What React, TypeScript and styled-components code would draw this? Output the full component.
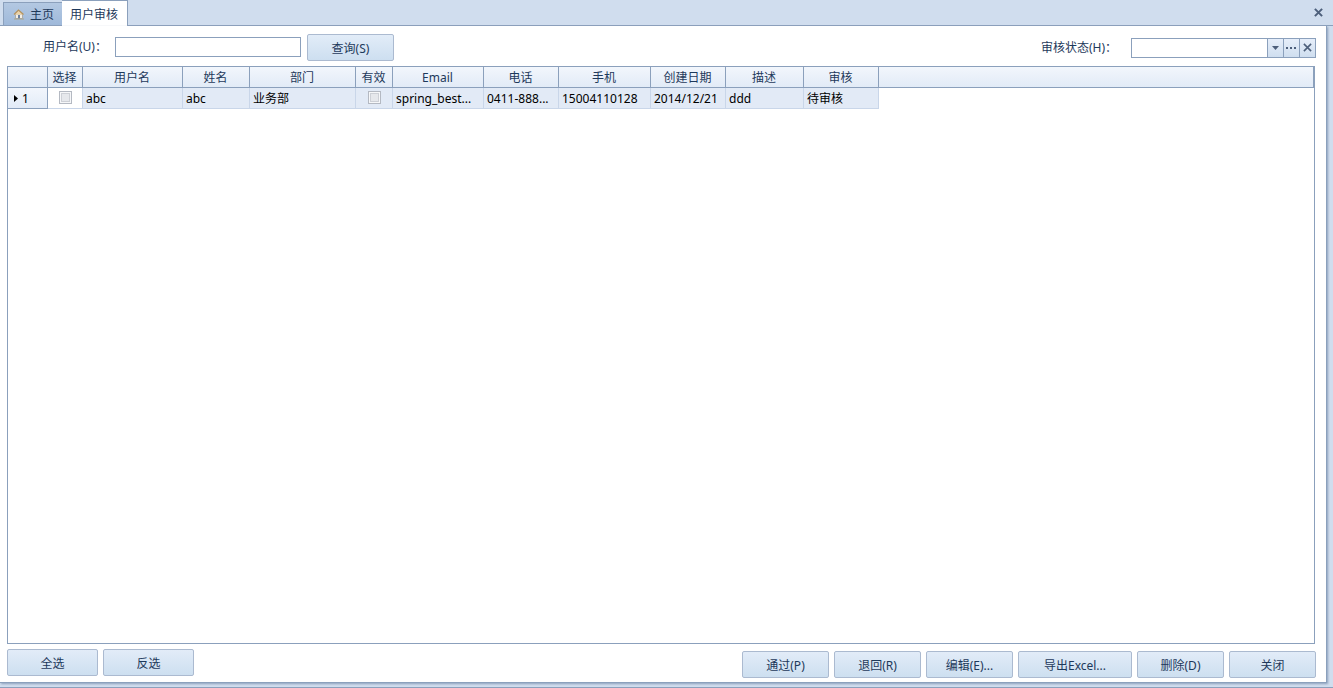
import React, { useState } from "react";
import styled, { createGlobalStyle } from "styled-components";

const Global = createGlobalStyle`
  * { box-sizing: border-box; }
  body { margin: 0; background: #d0ddee; }
  body, button, input, table {
    font-family: "Noto Sans", "Noto Sans CJK SC", sans-serif;
    font-size: 12px;
    line-height: 16px;
    color: #1e395b;
  }
`;

const Window = styled.div`
  min-height: 100vh;
  display: flex;
  flex-direction: column;
  background: #d0ddee;
  border-bottom: 1px solid #8ba0bc;
`;

const TabStrip = styled.div`
  display: flex;
  align-items: flex-end;
  height: 26px;
  padding-left: 3px;
  border-bottom: 1px solid #8ba0bc;
`;

const Tab = styled.button<{ $active?: boolean }>`
  display: flex;
  align-items: center;
  gap: 5px;
  height: ${(p) => (p.$active ? 26 : 23)}px;
  margin-bottom: ${(p) => (p.$active ? -1 : 0)}px;
  padding: ${(p) => (p.$active ? "2px 9px 0 8px" : "2px 8px 0 9px")};
  border: 1px solid #8ba0bc;
  border-width: ${(p) => (p.$active ? "1px 1px 0 0" : "1px 0 0 1px")};
  background: ${(p) => (p.$active ? "#fff" : "linear-gradient(#b3c8e2, #9fb9da)")};
  white-space: nowrap;
`;

const CloseTab = styled.button`
  margin-left: auto;
  margin-right: 10px;
  align-self: center;
  display: flex;
  padding: 0;
  border: 0;
  background: none;
`;

const Panel = styled.main`
  flex: 1;
  display: flex;
  flex-direction: column;
  margin: 0 6px 4px 0;
  padding: 8px 11px 4px 7px;
  background: #fff;
  border: 1px solid #8ba0bc;
  border-width: 0 1px 1px 0;
  box-shadow: 1px 1px 2px #8ba0bc;
`;

const SearchBar = styled.form`
  display: flex;
  align-items: center;
  height: 27px;
  margin-bottom: 5px;
  margin-right: -1px;
  padding-left: 36px;
`;

const Field = styled.label<{ $right?: boolean }>`
  display: flex;
  align-items: center;
  margin-left: ${(p) => (p.$right ? "auto" : "0")};
  padding-bottom: ${(p) => (p.$right ? 0 : 2)}px;
  white-space: nowrap;
`;

const Caption = styled.span<{ $width: number }>`
  width: ${(p) => p.$width}px;
`;

const TextBox = styled.input<{ $width: number }>`
  width: ${(p) => p.$width}px;
  height: 20px;
  padding: 0 4px;
  border: 1px solid #8ba0bc;
  background: #fff;
  outline: none;
`;

const Combo = styled.div`
  display: flex;
`;

const ComboButton = styled.button`
  display: flex;
  align-items: center;
  justify-content: center;
  width: 16px;
  height: 20px;
  padding: 0;
  border: 1px solid #8ba0bc;
  border-left: 0;
  background: linear-gradient(#e6eefa, #cfdeef);
`;

const Button = styled.button<{ $width: number }>`
  width: ${(p) => p.$width}px;
  height: 27px;
  padding: 2px 0 0;
  border: 1px solid #abbad0;
  border-radius: 2px;
  background: linear-gradient(#e2ecf8, #cddff0);
  white-space: nowrap;
`;

const SearchButton = styled(Button)`
  margin-left: 6px;
`;

const GridBox = styled.section`
  flex: 1;
  border: 1px solid #8ba0bc;
`;

const Grid = styled.table`
  width: 100%;
  table-layout: fixed;
  border-collapse: separate;
  border-spacing: 0;
`;

const HeadCell = styled.th`
  height: 21px;
  padding: 2px 1px 0 0;
  font-weight: 400;
  text-align: center;
  background: linear-gradient(#f2f6fc, #e2ebf7);
  border: 1px solid #8ba0bc;
  border-width: 0 1px 1px 0;
`;

const Cell = styled.td<{ $plain?: boolean }>`
  height: 21px;
  padding: 2px 3px 0;
  overflow: hidden;
  text-overflow: ellipsis;
  white-space: nowrap;
  color: #000;
  background: ${(p) => (p.$plain ? "#fff" : "#e2eaf6")};
  border: 1px solid #c9d6e9;
  border-width: 0 1px 1px 0;
`;

const CheckCell = styled(Cell)`
  padding: 0;
  text-align: center;
`;

const RowHead = styled.th`
  height: 21px;
  padding: 2px 6px 0;
  text-align: left;
  font-weight: 400;
  color: #000;
  background: linear-gradient(#f2f6fc, #e2ebf7);
  border: 1px solid #8ba0bc;
  border-width: 0 1px 1px 0;
`;

const RowMark = styled.svg`
  margin-right: 4px;
  vertical-align: 1px;
`;

const Filler = styled.td``;

const Tick = styled.input`
  appearance: none;
  display: block;
  width: 13px;
  height: 13px;
  margin: 0 auto 2px;
  border: 1px solid #b4b9c2;
  background: #e6e8ec;
  box-shadow: inset 0 0 0 1px #f6f7f9, inset 0 0 0 2px #cdd0d6;
  &:checked { background: #6f86a8; }
`;

const Footer = styled.footer`
  display: flex;
  gap: 5px;
  padding-top: 5px;
  margin-right: -1px;
`;

const FooterGroup = styled.div<{ $right?: boolean }>`
  display: flex;
  gap: 5px;
  margin-left: ${(p) => (p.$right ? "auto" : "0")};
  padding-top: ${(p) => (p.$right ? 2 : 0)}px;
`;

const columns = [
  { title: "选择", width: 35 },
  { title: "用户名", width: 100 },
  { title: "姓名", width: 67 },
  { title: "部门", width: 106 },
  { title: "有效", width: 37 },
  { title: "Email", width: 91 },
  { title: "电话", width: 75 },
  { title: "手机", width: 92 },
  { title: "创建日期", width: 75 },
  { title: "描述", width: 78 },
  { title: "审核", width: 75 },
];

const actions = [
  { text: "通过(P)", width: 87 },
  { text: "退回(R)", width: 87 },
  { text: "编辑(E)...", width: 87 },
  { text: "导出Excel...", width: 114 },
  { text: "删除(D)", width: 87 },
  { text: "关闭", width: 87 },
];

const HomeIcon = () => (
  <svg width="12" height="12" viewBox="0 0 12 12" aria-hidden="true">
    <path d="M2.5 5h7v4.500h-7z" fill="#f4efe6" stroke="#a3a09a" strokeWidth="0.800" />
    <path d="M1 5.500L5.500 1l5 4.500" fill="#ecd3a8" stroke="#b3925f" strokeWidth="1.200" />
    <path d="M5 6h2v3.500H5z" fill="#6a7f9f" />
    <path d="M1 10h10" stroke="#a9a58c" strokeWidth="1" />
  </svg>
);

const Cross = ({ size, weight }: { size: number; weight: number }) => (
  <svg width={size} height={size} viewBox="0 0 8 8" aria-hidden="true">
    <path d="M0.8 0.8l6.4 6.4M7.2 0.8L0.8 7.2" stroke="#4d5f7b" strokeWidth={weight} />
  </svg>
);

export default function App() {
  const [name, setName] = useState("");
  const [status, setStatus] = useState("");
  return (
    <>
      <Global />
      <Window>
        <TabStrip>
          <Tab type="button"><HomeIcon />主页</Tab>
          <Tab type="button" $active>用户审核</Tab>
          <CloseTab type="button" aria-label="关闭标签"><Cross size={9} weight={1.8} /></CloseTab>
        </TabStrip>
        <Panel>
          <SearchBar onSubmit={(e) => e.preventDefault()}>
            <Field>
              <Caption $width={72}>用户名(U)：</Caption>
              <TextBox $width={186} value={name} onChange={(e) => setName(e.target.value)} />
            </Field>
            <SearchButton $width={87}>查询(S)</SearchButton>
            <Field as="div" $right>
              <Caption as="label" htmlFor="status" $width={90}>审核状态(H)：</Caption>
              <Combo>
                <TextBox id="status" $width={137} value={status} onChange={(e) => setStatus(e.target.value)} />
                <ComboButton type="button" aria-label="展开">
                  <svg width="7" height="4" viewBox="0 0 7 4"><path d="M0 0h7L3.5 4z" fill="#4d5f7b" /></svg>
                </ComboButton>
                <ComboButton type="button" aria-label="更多">
                  <svg width="11" height="2" viewBox="0 0 11 2"><path d="M0 0h2v2H0zM4 0h2v2H4zM8 0h2v2H8z" fill="#4d5f7b" /></svg>
                </ComboButton>
                <ComboButton type="button" aria-label="清除" onClick={() => setStatus("")}>
                  <Cross size={9} weight={1.4} />
                </ComboButton>
              </Combo>
            </Field>
          </SearchBar>
          <GridBox>
            <Grid>
              <colgroup>
                <col style={{ width: 40 }} />
                {columns.map((c) => <col key={c.title} style={{ width: c.width }} />)}
                <col />
              </colgroup>
              <thead>
                <tr>
                  <HeadCell />
                  {columns.map((c) => <HeadCell key={c.title} scope="col">{c.title}</HeadCell>)}
                  <HeadCell />
                </tr>
              </thead>
              <tbody>
                <tr>
                  <RowHead scope="row">
                    <RowMark width="4" height="7" viewBox="0 0 4 7"><path d="M0 0l4 3.5L0 7z" fill="#000" /></RowMark>
                    1
                  </RowHead>
                  <CheckCell $plain><Tick type="checkbox" aria-label="选择" /></CheckCell>
                  <Cell>abc</Cell>
                  <Cell>abc</Cell>
                  <Cell>业务部</Cell>
                  <CheckCell><Tick type="checkbox" aria-label="有效" /></CheckCell>
                  <Cell>spring_best...</Cell>
                  <Cell>0411-888...</Cell>
                  <Cell>15004110128</Cell>
                  <Cell>2014/12/21</Cell>
                  <Cell>ddd</Cell>
                  <Cell>待审核</Cell>
                  <Filler />
                </tr>
              </tbody>
            </Grid>
          </GridBox>
          <Footer>
            <FooterGroup>
              <Button type="button" $width={91}>全选</Button>
              <Button type="button" $width={91}>反选</Button>
            </FooterGroup>
            <FooterGroup $right>
              {actions.map((a) => <Button key={a.text} type="button" $width={a.width}>{a.text}</Button>)}
            </FooterGroup>
          </Footer>
        </Panel>
      </Window>
    </>
  );
}
